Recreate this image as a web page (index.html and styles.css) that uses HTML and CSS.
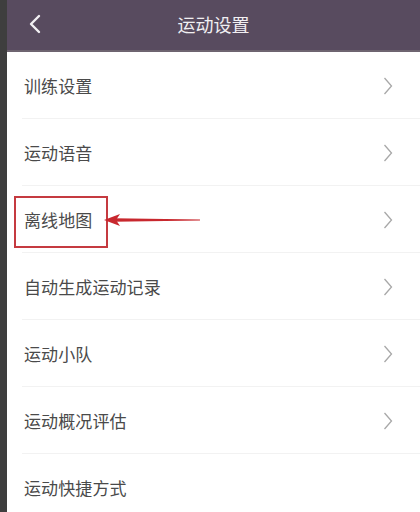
FILE: index.html
```html
<!DOCTYPE html>
<html lang="zh">
<head>
<meta charset="utf-8">
<link rel="stylesheet" href="styles.css">
</head>
<body>
<div class="screen">
  <div class="edge"></div>
  <div class="main">
    <header class="bar">
      <svg class="back" width="14" height="20" viewBox="0 0 14 20"><polyline points="11,2 3,10 11,18" fill="none" stroke="#f2f0f3" stroke-width="2.4" stroke-linecap="round" stroke-linejoin="round"/></svg>
      <div class="title">运动设置</div>
    </header>
    <ul class="list">
      <li class="row"><span class="label">训练设置</span><svg class="chev" width="10" height="20" viewBox="0 0 10 20"><polyline points="1.5,2 8.5,10 1.5,18" fill="none" stroke="#a8a8a8" stroke-width="1.3"/></svg></li>
      <li class="row"><span class="label">运动语音</span><svg class="chev" width="10" height="20" viewBox="0 0 10 20"><polyline points="1.5,2 8.5,10 1.5,18" fill="none" stroke="#a8a8a8" stroke-width="1.3"/></svg></li>
      <li class="row marked"><span class="label">离线地图</span><svg class="chev" width="10" height="20" viewBox="0 0 10 20"><polyline points="1.5,2 8.5,10 1.5,18" fill="none" stroke="#a8a8a8" stroke-width="1.3"/></svg>
        <div class="box"></div>
        <svg class="arrow" width="100" height="14" viewBox="0 0 100 14"><polygon points="10,5.3 96,6.5 96,7.5 10,8.7" fill="#c8282e"/><polygon points="0,7 16,1 12,7 16,13" fill="#c8282e"/></svg>
      </li>
      <li class="row"><span class="label">自动生成运动记录</span><svg class="chev" width="10" height="20" viewBox="0 0 10 20"><polyline points="1.5,2 8.5,10 1.5,18" fill="none" stroke="#a8a8a8" stroke-width="1.3"/></svg></li>
      <li class="row"><span class="label">运动小队</span><svg class="chev" width="10" height="20" viewBox="0 0 10 20"><polyline points="1.5,2 8.5,10 1.5,18" fill="none" stroke="#a8a8a8" stroke-width="1.3"/></svg></li>
      <li class="row"><span class="label">运动概况评估</span><svg class="chev" width="10" height="20" viewBox="0 0 10 20"><polyline points="1.5,2 8.5,10 1.5,18" fill="none" stroke="#a8a8a8" stroke-width="1.3"/></svg></li>
      <li class="row"><span class="label">运动快捷方式</span></li>
    </ul>
  </div>
</div>
</body>
</html>
```
FILE: styles.css
```css
* { box-sizing: border-box; }
html, body { margin: 0; padding: 0; }
body {
  width: 420px;
  height: 512px;
  overflow: hidden;
  font-family: "Noto Sans CJK SC", "Noto Sans", sans-serif;
  background: #ffffff;
}
.screen {
  display: flex;
  height: 512px;
}
.edge {
  width: 7px;
  flex: none;
  background: #3e3e3e;
}
.main {
  flex: 1;
  display: flex;
  flex-direction: column;
  background: #ffffff;
}
.bar {
  height: 52px;
  flex: none;
  background: #584b5f;
  border-bottom: 2px solid #6e6470;
  display: flex;
  align-items: center;
  position: relative;
}
.back {
  margin-left: 21px;
  margin-top: -2px;
}
.title {
  position: absolute;
  left: 0;
  right: 0;
  text-align: center;
  color: #f1eff2;
  font-size: 18px;
  margin-top: -3px;
  pointer-events: none;
}
.list {
  list-style: none;
  margin: 0;
  padding: 0;
}
.row {
  height: 67px;
  margin-left: 15px;
  padding-left: 2px;
  padding-right: 27px;
  border-bottom: 1px solid #f2f2f2;
  display: flex;
  align-items: center;
  justify-content: space-between;
  position: relative;
}
.label {
  font-size: 17px;
  color: #4a4a4a;
  letter-spacing: 0.1px;
}
.chev { flex: none; margin-top: 2px; }
.box {
  position: absolute;
  left: -8px;
  top: 10px;
  width: 94px;
  height: 52px;
  border: 2px solid #c53a40;
}
.arrow {
  position: absolute;
  left: 82px;
  top: 27px;
}
```
